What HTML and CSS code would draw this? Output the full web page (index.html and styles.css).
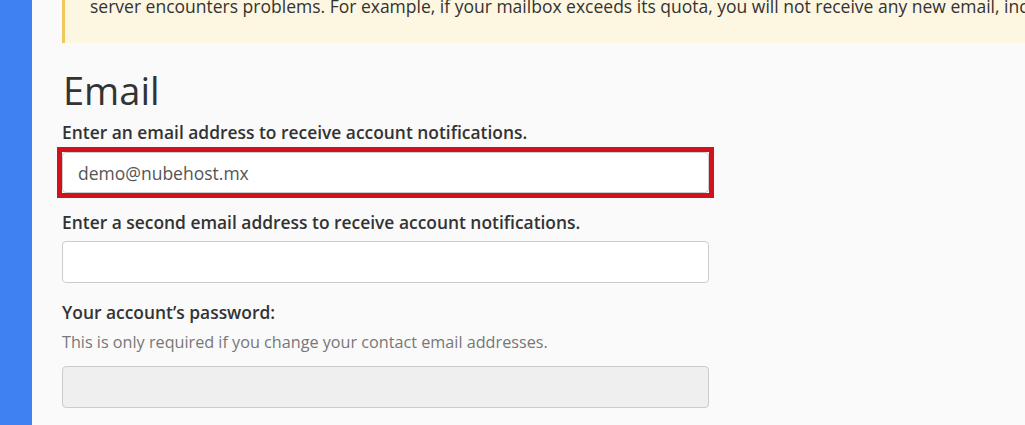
FILE: index.html
```html
<!DOCTYPE html>
<html lang="en">
<head>
<meta charset="utf-8">
<title>Contact Information</title>
<link rel="stylesheet" href="styles.css">
</head>
<body>
<div class="layout">
  <nav class="sidebar"></nav>
  <main class="content">
    <div class="alert">
      <p>server encounters problems. For example, if your mailbox exceeds its quota, you will not receive any new email, including notifications.</p>
    </div>
    <h1 class="title">Email</h1>
    <form class="form">
      <div class="field">
        <label class="label" for="email1">Enter an email address to receive account notifications.</label>
        <div class="highlight">
          <input class="input" id="email1" type="text" value="demo@nubehost.mx">
        </div>
      </div>
      <div class="field">
        <label class="label" for="email2">Enter a second email address to receive account notifications.</label>
        <input class="input" id="email2" type="text">
      </div>
      <div class="field">
        <label class="label" for="pass">Your account’s password:</label>
        <p class="help">This is only required if you change your contact email addresses.</p>
        <input class="input input-disabled" id="pass" type="password" disabled>
      </div>
    </form>
  </main>
</div>
</body>
</html>
```

FILE: styles.css
```css
* { box-sizing: border-box; }

html, body {
  margin: 0;
  padding: 0;
  height: 100%;
  overflow: hidden;
}

body {
  font-family: "Open Sans", "Liberation Sans", sans-serif;
  background: #fafafa;
  color: #333;
}

.layout {
  display: flex;
  height: 425px;
}

.sidebar {
  width: 32px;
  flex: none;
  background: #3f81f0;
}

.content {
  flex: 1;
  padding-left: 30px;
  min-width: 0;
}

/* warning banner, scrolled so only its last line shows */
.alert {
  background: #fdf6e1;
  border-left: 3px solid #f2c75c;
  height: 43px;
  padding-left: 25px;
  overflow: hidden;
  white-space: nowrap;
}

.alert p {
  margin: -6px 0 0;
  font-size: 17.5px;
  line-height: 24px;
  color: #333;
}

.title {
  margin: 24px 0 7px 1px;
  font-size: 38px;
  font-weight: 400;
  line-height: 46px;
  color: #333;
}

.form {
  width: 647px;
}

.field {
  display: flex;
  flex-direction: column;
  margin-bottom: 17px;
}

.label {
  font-size: 17.4px;
  font-weight: 600;
  line-height: 24px;
  color: #333;
  margin-bottom: 7px;
}

.help {
  margin: -1px 0 12px;
  font-size: 16.2px;
  line-height: 24px;
  color: #777;
}

/* red frame drawn round the first field */
.highlight {
  margin: -4px -5px -5px;
  border: 5px solid #d0121f;
  background: #fff;
}

.input {
  display: block;
  width: 647px;
  height: 42px;
  border: 1px solid #ccc;
  border-radius: 4px;
  background: #fff;
  font-family: inherit;
  font-size: 17.5px;
  color: #555;
  padding: 0 15px;
}

.highlight .input {
  height: 41px;
}

.input-disabled {
  background: #efefef;
}
```
